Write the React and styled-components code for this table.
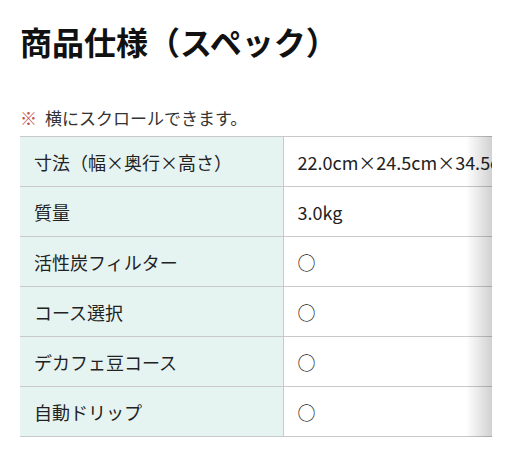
import React from 'react';
import styled, { createGlobalStyle } from 'styled-components';

const specs = [
  { label: '寸法（幅×奥行×高さ）', value: '22.0cm×24.5cm×34.5cm' },
  { label: '質量', value: '3.0kg' },
  { label: '活性炭フィルター', value: '○' },
  { label: 'コース選択', value: '○' },
  { label: 'デカフェ豆コース', value: '○' },
  { label: '自動ドリップ', value: '○' },
];

const GlobalStyle = createGlobalStyle`
  body {
    margin: 0;
    background: #fff;
    font-family: "Noto Sans CJK JP", "Noto Sans", sans-serif;
    color: #222;
  }
`;

const Page = styled.div`
  padding: 17px 20px 0;
`;

const Title = styled.h2`
  margin: 0;
  font-size: 32px;
  line-height: 48px;
  font-weight: 700;
  color: #111;
`;

const Note = styled.p`
  margin: 40px 0 6px;
  font-size: 17px;
  line-height: 25px;
  color: #333;
`;

const Mark = styled.span`
  color: #c0504d;
  margin-right: 8px;
`;

const ScrollWrap = styled.div`
  position: relative;
`;

const Scroller = styled.div`
  overflow-x: auto;
  scrollbar-width: none;
  &::-webkit-scrollbar {
    display: none;
  }
`;

const Fade = styled.div`
  position: absolute;
  top: 0;
  right: 0;
  bottom: 0;
  width: 26px;
  pointer-events: none;
  background: linear-gradient(to right, rgba(0, 0, 0, 0), rgba(0, 0, 0, 0.18));
`;

const Table = styled.table`
  border-collapse: collapse;
  font-size: 18px;
  white-space: nowrap;
`;

const Row = styled.tr`
  border-top: 1px solid #c9c9c9;
  border-bottom: 1px solid #c9c9c9;
`;

const Cell = styled.td`
  height: 50px;
  padding: 0 14px;
  box-sizing: border-box;
  vertical-align: middle;
  line-height: 26px;
  background: ${(p) => (p.$head ? '#e6f4f1' : '#fff')};
  width: ${(p) => (p.$head ? '263px' : '280px')};
  min-width: ${(p) => (p.$head ? '263px' : '280px')};
  border-left: ${(p) => (p.$head ? 'none' : '1px solid #c9c9c9')};
`;

const App = () => (
  <>
    <GlobalStyle />
    <Page>
      <Title>商品仕様（スペック）</Title>
      <Note>
        <Mark>※</Mark>横にスクロールできます。
      </Note>
      <ScrollWrap>
        <Scroller>
          <Table>
            <tbody>
              {specs.map((s) => (
                <Row key={s.label}>
                  <Cell $head>{s.label}</Cell>
                  <Cell>{s.value}</Cell>
                </Row>
              ))}
            </tbody>
          </Table>
        </Scroller>
        <Fade />
      </ScrollWrap>
    </Page>
  </>
);

export default App;
